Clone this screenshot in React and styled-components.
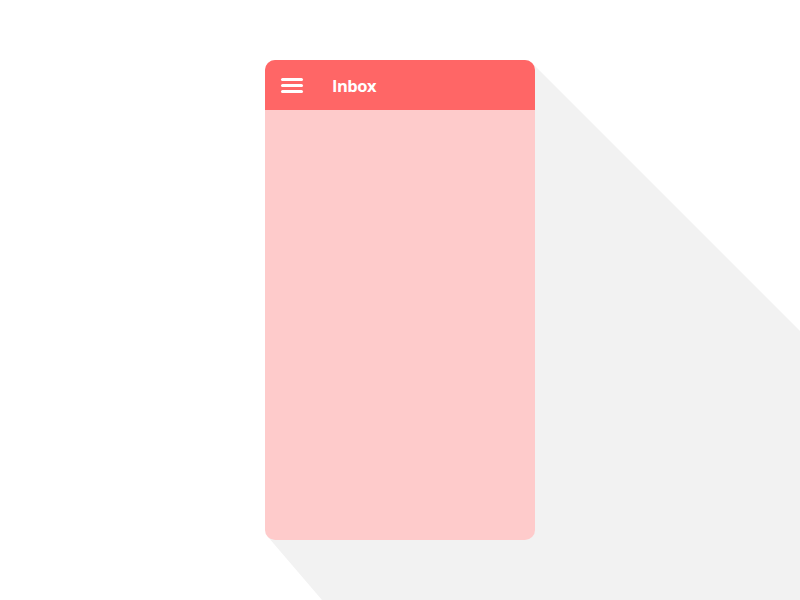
import React from "react"
import styled, { createGlobalStyle } from "styled-components"

const GlobalStyle = createGlobalStyle`
  html, body {
    margin: 0;
    padding: 0;
    background: #ffffff;
    font-family: "Open Sans", "Liberation Sans", sans-serif;
  }
`

const Page = styled.div`
  position: relative;
  width: 800px;
  height: 600px;
  overflow: hidden;
  display: flex;
  justify-content: center;
  padding-top: 60px;
  box-sizing: border-box;
`

// long flat shadow behind the phone
const Shadow = styled.svg`
  position: absolute;
  left: 0;
  top: 0;
  width: 800px;
  height: 600px;
`

const Phone = styled.div`
  position: relative;
  width: 270px;
  height: 480px;
  border-radius: 10px;
  overflow: hidden;
  background: #fecbcb;
  display: flex;
  flex-direction: column;
`

const Header = styled.header`
  height: 50px;
  background: #ff6666;
  display: flex;
  align-items: center;
  padding-left: 16px;
  gap: 29px;
`

const Burger = styled.button`
  width: 22px;
  height: 15px;
  padding: 0;
  border: 0;
  background: transparent;
  display: flex;
  flex-direction: column;
  justify-content: space-between;
  margin-top: 1px;
`

const Bar = styled.span`
  display: block;
  height: 3px;
  border-radius: 2px;
  background: #ffffff;
`

const Title = styled.h1`
  margin: 0;
  color: #ffffff;
  font-size: 16.5px;
  font-weight: 700;
  letter-spacing: -0.5px;
`

export default function App() {
  return (
    <Page>
      <GlobalStyle />
      <Shadow viewBox="0 0 800 600">
        <polygon points="532,63 800,331 800,600 322,600 268,537" fill="#f2f2f2" />
      </Shadow>
      <Phone>
        <Header>
          <Burger aria-label="Menu">
            <Bar />
            <Bar />
            <Bar />
          </Burger>
          <Title>Inbox</Title>
        </Header>
      </Phone>
    </Page>
  )
}
